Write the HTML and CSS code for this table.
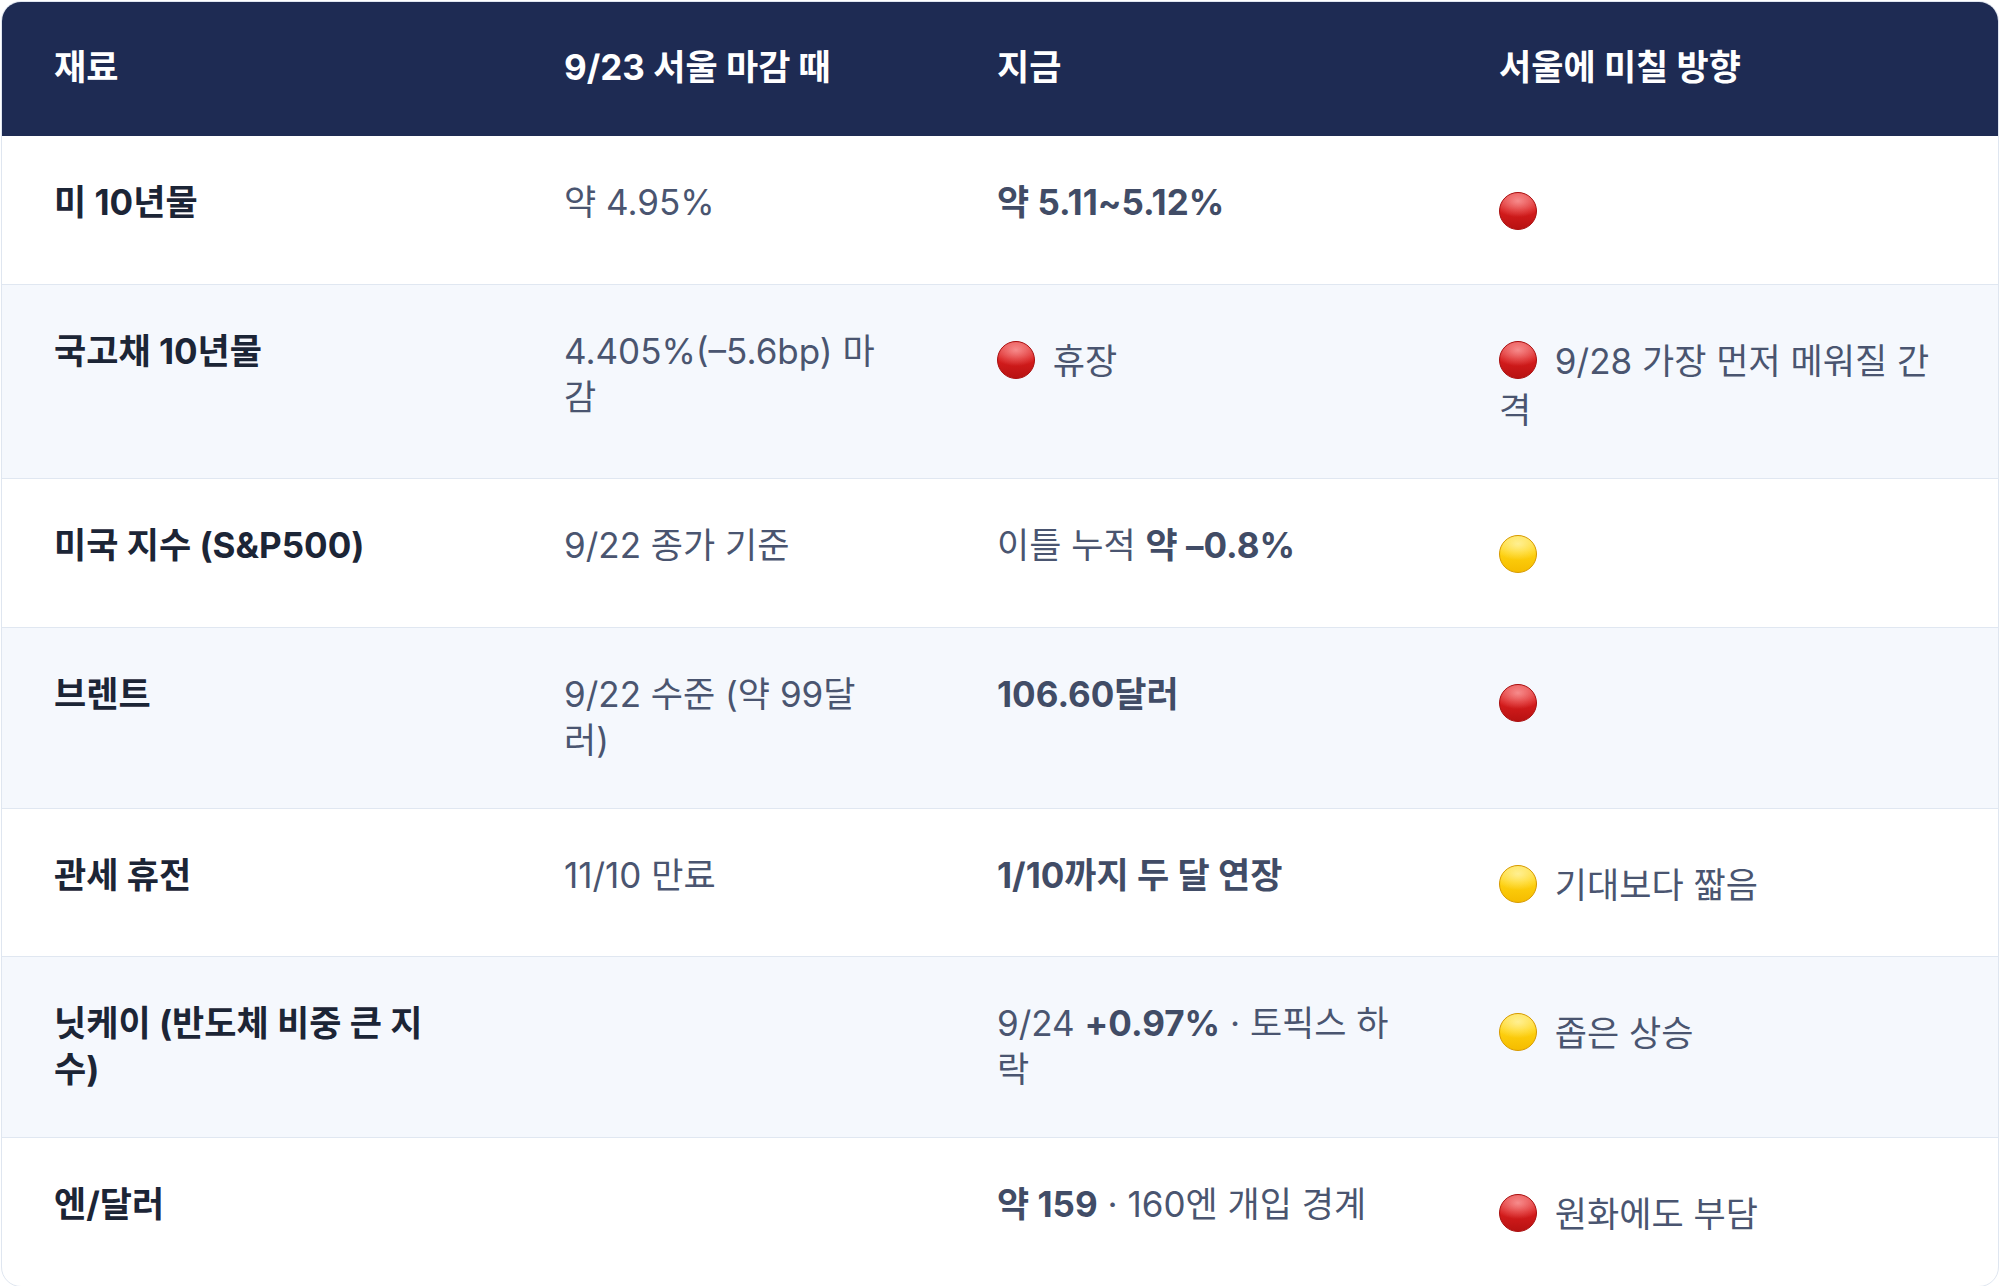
FILE: index.html
```html
<!DOCTYPE html>
<html lang="ko">
<head>
<meta charset="utf-8">
<title>재료 표</title>
<link rel="stylesheet" href="styles.css">
</head>
<body>
<div class="card">
  <table class="tbl">
    <colgroup>
      <col class="c1"><col class="c2"><col class="c3"><col class="c4">
    </colgroup>
    <thead>
      <tr><th>재료</th><th>9/23 서울 마감 때</th><th>지금</th><th>서울에 미칠 방향</th></tr>
    </thead>
    <tbody>
      <tr>
        <td class="name">미 10년물</td>
        <td class="prev">약 4.95%</td>
        <td><b>약 5.11~5.12%</b></td>
        <td><span class="dot red" role="img" aria-label="🔴"></span></td>
      </tr>
      <tr class="alt">
        <td class="name">국고채 10년물</td>
        <td class="prev">4.405%(–5.6bp) 마감</td>
        <td><span class="dot red" role="img" aria-label="🔴"></span> 휴장</td>
        <td><span class="dot red" role="img" aria-label="🔴"></span> 9/28 가장 먼저 메워질 간격</td>
      </tr>
      <tr>
        <td class="name">미국 지수 (S&amp;P500)</td>
        <td class="prev">9/22 종가 기준</td>
        <td>이틀 누적 <b>약 –0.8%</b></td>
        <td><span class="dot yellow" role="img" aria-label="🟡"></span></td>
      </tr>
      <tr class="alt">
        <td class="name">브렌트</td>
        <td class="prev">9/22 수준 (약 99달러)</td>
        <td><b>106.60달러</b></td>
        <td><span class="dot red" role="img" aria-label="🔴"></span></td>
      </tr>
      <tr>
        <td class="name">관세 휴전</td>
        <td class="prev">11/10 만료</td>
        <td><b>1/10까지 두 달 연장</b></td>
        <td><span class="dot yellow" role="img" aria-label="🟡"></span> 기대보다 짧음</td>
      </tr>
      <tr class="alt">
        <td class="name">닛케이 (반도체 비중 큰 지수)</td>
        <td class="prev"></td>
        <td>9/24 <b>+0.97%</b> · 토픽스 하락</td>
        <td><span class="dot yellow" role="img" aria-label="🟡"></span> 좁은 상승</td>
      </tr>
      <tr>
        <td class="name">엔/달러</td>
        <td class="prev"></td>
        <td><b>약 159</b> · 160엔 개입 경계</td>
        <td><span class="dot red" role="img" aria-label="🔴"></span> 원화에도 부담</td>
      </tr>
    </tbody>
  </table>
</div>
</body>
</html>
```
FILE: styles.css
```css
html, body {
  margin: 0;
  padding: 0;
  background: #ffffff;
}
body {
  padding: 1px;
  font-family: Inter, "Noto Sans CJK KR", sans-serif;
}
.card {
  border: 1px solid #dfe6f0;
  border-radius: 20px;
  overflow: hidden;
  background: #ffffff;
}
.tbl {
  width: 100%;
  border-collapse: collapse;
  table-layout: fixed;
}
.c1 { width: 510px; }
.c2 { width: 433px; }
.c3 { width: 502px; }
.c4 { width: 551px; }
.tbl th {
  background: #1e2b53;
  color: #ffffff;
  font-weight: 700;
  font-size: 35px;
  line-height: 46px;
  text-align: left;
  padding: 42px 52px 46px 52px;
}
.tbl td {
  font-size: 35px;
  line-height: 46px;
  color: #4a5570;
  vertical-align: top;
  padding: 43px 52px 45px 52px;
  border-top: 1px solid #e0e7f1;
}
.tbl td.prev { padding-right: 60px; }
.tbl tbody tr:first-child td { border-top: none; }
.tbl tr.alt td { background: #f5f8fd; }
.tbl td.name {
  font-weight: 700;
  color: #1c2536;
}
.tbl td b {
  font-weight: 700;
  color: #414c66;
}
.dot {
  display: inline-block;
  box-sizing: border-box;
  width: 38px;
  height: 38px;
  border-radius: 50%;
  margin: 13px 8px 8.5px 0;
  vertical-align: -13.5px;
}
.dot.red {
  background: radial-gradient(ellipse 70% 45% at 50% 22%, rgba(255,170,170,0.75) 0%, rgba(255,120,120,0) 100%),
              linear-gradient(180deg, #e64444 0%, #d81d1d 45%, #b81212 100%);
  border: 1px solid #a91010;
}
.dot.yellow {
  background: radial-gradient(ellipse 70% 45% at 50% 22%, rgba(255,245,170,0.8) 0%, rgba(255,240,120,0) 100%),
              linear-gradient(180deg, #ffe04a 0%, #ffd20f 45%, #f5bc00 100%);
  border: 1px solid #d79a00;
}
```
